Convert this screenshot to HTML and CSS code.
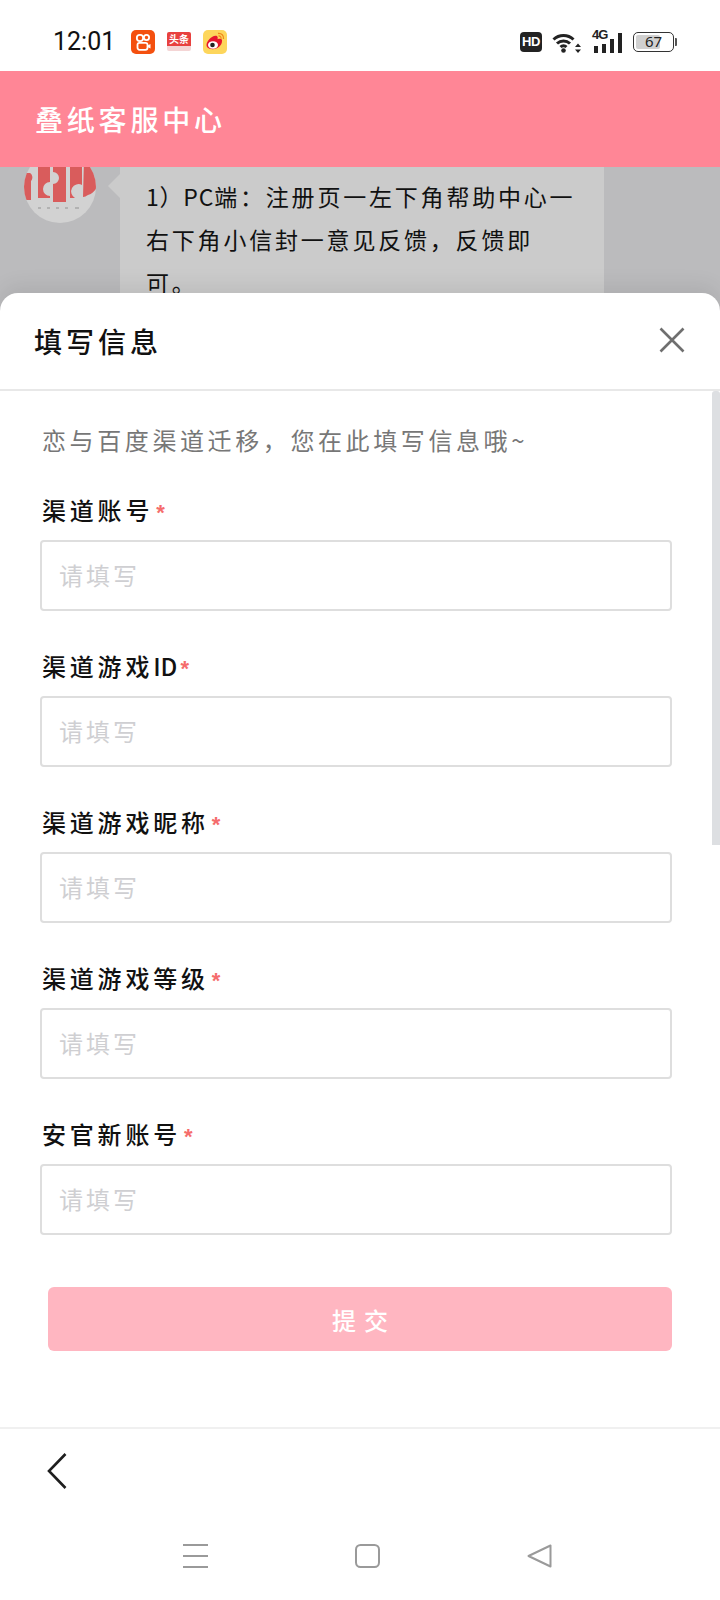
FILE: index.html
```html
<!DOCTYPE html>
<html lang="zh-CN">
<head>
<meta charset="utf-8">
<title>叠纸客服中心</title>
<link rel="stylesheet" href="styles.css">
</head>
<body>
<div class="page">
  <div class="status">
    <span class="time">12:01</span>
    <div class="apps">
      <svg class="app" viewBox="0 0 24 24"><rect width="24" height="24" rx="5" fill="#f4500f"/><circle cx="9" cy="8" r="3.200" fill="none" stroke="#fff" stroke-width="1.800"/><circle cx="15.500" cy="7.500" r="2.600" fill="none" stroke="#fff" stroke-width="1.800"/><rect x="6.500" y="12.800" width="10" height="7" rx="2" fill="none" stroke="#fff" stroke-width="1.800"/><path d="M16.500 15.500l3-1.500v4.500l-3-1.500z" fill="#fff"/></svg>
      <div class="toutiao"><span class="toutiao-text">头条</span></div>
      <svg class="app" viewBox="0 0 24 24"><rect width="24" height="24" rx="5" fill="#fdd65c"/><path d="M3.500 15c0-4 5-9 9-9.300 2.500 0 2.500 2 2 3.500 3-1 5-.3 4.500 2 0 4-4.500 8-9.500 8-3.500 0-6-1.700-6-4.200z" fill="#e6162d"/><ellipse cx="10" cy="15" rx="5" ry="3.800" fill="#fff"/><circle cx="9.500" cy="15" r="2.300" fill="#222"/><path d="M15 3.500c3.500-.5 6 2 5.500 5.500M15.500 6c1.800-.2 2.800 1 2.500 2.800" fill="none" stroke="#f08a1d" stroke-width="1.300"/></svg>
    </div>
    <div class="sys">
      <div class="hd">HD</div>
      <svg class="wifi" viewBox="0 0 31 22"><path d="M1.500 8.500a14.500 14.500 0 0 1 20 0M5 12.500a9.500 9.500 0 0 1 13 0M8.500 16a4.500 4.500 0 0 1 6 0" fill="none" stroke="#222" stroke-width="3"/><circle cx="11.500" cy="19.500" r="2.300" fill="#222"/><path d="M26 12.500l3 3.500h-6zM26 22l3-3.500h-6z" fill="#222"/></svg>
      <div class="cell">
        <span class="four-g">4G</span>
        <div class="bars"><i class="bar b1"></i><i class="bar b2"></i><i class="bar b3"></i><i class="bar b4"></i></div>
      </div>
      <div class="battery"><div class="battery-body"><span class="battery-fill"></span><span class="battery-num">67</span></div><i class="battery-nub"></i></div>
    </div>
  </div>

  <header class="topbar">叠纸客服中心</header>

  <div class="chat">
    <svg class="avatar" viewBox="0 0 72 72">
      <defs><clipPath id="ac"><circle cx="36" cy="36" r="36"/></clipPath></defs>
      <circle cx="36" cy="36" r="36" fill="#d2d2d2"/>
      <g clip-path="url(#ac)">
        <path d="M0 22h6c3 2 3 6 1 8v19H0z" fill="#d95c5c"/>
        <path d="M14 8h12v23a7 7 0 0 0 0 14v2H14z" fill="#d95c5c"/>
        <path d="M29 8h13v43H29V33a6 6 0 0 0 0-12z" fill="#d95c5c"/>
        <path d="M46 8h12v26a7 7 0 0 0-7 13h-5z" fill="#d95c5c"/>
        <path d="M60 8h12v30c-2 2-4 5-8 6-2 1-3 2-5 2z" fill="#d95c5c"/>
      </g>
      <path d="M14 57h3M23 57h3M32 57h3M41 57h3M51 57h4" stroke="#a8a8a8" stroke-width="1.500" fill="none"/>
    </svg>
    <div class="bubble"><span class="lead">1）PC</span>端：注册页一左下角帮助中心一右下角小信封一意见反馈，反馈即<br>可。</div>
  </div>

  <section class="sheet">
    <div class="sheet-head">
      <h2 class="sheet-title">填写信息</h2>
      <svg class="close" viewBox="0 0 26 26"><path d="M1.500 1.500l23 23M24.500 1.500l-23 23" stroke="#6f6f6f" stroke-width="2.600" fill="none"/></svg>
    </div>
    <div class="sheet-body">
      <i class="scrollbar"></i>
      <p class="intro">恋与百度渠道迁移，您在此填写信息哦~</p>
      <div class="field">
        <label class="label">渠道账号<span class="req">*</span></label>
        <div class="input">请填写</div>
      </div>
      <div class="field">
        <label class="label">渠道游戏<span class="tight">ID</span><span class="req">*</span></label>
        <div class="input">请填写</div>
      </div>
      <div class="field">
        <label class="label">渠道游戏昵称<span class="req">*</span></label>
        <div class="input">请填写</div>
      </div>
      <div class="field">
        <label class="label">渠道游戏等级<span class="req">*</span></label>
        <div class="input">请填写</div>
      </div>
      <div class="field">
        <label class="label">安官新账号<span class="req">*</span></label>
        <div class="input">请填写</div>
      </div>
      <button class="submit">提交</button>
    </div>
    <div class="browser-bar">
      <svg class="back" viewBox="0 0 20 36"><path d="M18.500 1L2 18l16.500 17" fill="none" stroke="#1e1e1e" stroke-width="2.600"/></svg>
    </div>
    <nav class="navbar">
      <svg class="nav-icon" viewBox="0 0 25 24"><path d="M0 1h25M0 12h25M0 23h25" stroke="#9a9a9a" stroke-width="2" fill="none"/></svg>
      <svg class="nav-icon" viewBox="0 0 25 24"><rect x="1" y="1" width="23" height="22" rx="4.500" fill="none" stroke="#9a9a9a" stroke-width="2"/></svg>
      <svg class="nav-icon" viewBox="0 0 25 24"><path d="M23.500 1.500v21L1.500 12z" fill="none" stroke="#9a9a9a" stroke-width="2" stroke-linejoin="round"/></svg>
    </nav>
  </section>
</div>
</body>
</html>
```

FILE: styles.css
```css
* { box-sizing: border-box; }
html, body { margin: 0; padding: 0; }
body { background: #fff; font-family: "Noto Sans CJK SC", "Noto Sans", sans-serif; color: #111; }
.page { position: relative; width: 720px; height: 1600px; overflow: hidden; display: flex; flex-direction: column; }

.status { height: 71px; flex: none; display: flex; align-items: center; padding: 12px 0 0 53px; background: #fff; }
.time { font-family: Roboto, sans-serif; font-size: 25px; color: #111; width: 78px; line-height: 30px; }
.apps { display: flex; align-items: center; gap: 12px; }
.app { width: 24px; height: 24px; display: block; }
.toutiao { width: 24px; height: 19px; background: #e8413f; border-radius: 2px; display: flex; justify-content: center; align-items: flex-start; overflow: hidden; border-bottom: 5px solid #f4d5d5; }
.toutiao-text { font-size: 10px; line-height: 14px; color: #fff; font-weight: 700; }
.sys { margin-left: auto; display: flex; align-items: center; padding-right: 43px; }
.hd { width: 22px; height: 20px; background: #222; border-radius: 4px; color: #fff; font-family: "Liberation Sans", sans-serif; font-weight: 700; font-size: 13px; line-height: 20px; text-align: center; letter-spacing: -.5px; }
.wifi { width: 31px; height: 22px; margin-left: 10px; display: block; }
.cell { position: relative; width: 31px; height: 22px; margin-left: 9px; }
.four-g { position: absolute; left: 0; top: -3px; font-family: "Liberation Sans", sans-serif; font-size: 13px; font-weight: 700; letter-spacing: -1px; line-height: 13px; color: #222; }
.bars { display: flex; align-items: flex-end; gap: 4px; height: 20px; margin-top: 2px; padding-left: 2px; }
.bar { display: block; width: 4px; background: #222; }
.b1 { height: 7px; }
.b2 { height: 9px; }
.b3 { height: 14px; }
.b4 { height: 20px; }
.battery { display: flex; align-items: center; margin-left: 10px; }
.battery-body { position: relative; width: 41px; height: 20px; border: 1.500px solid #333; border-radius: 5px; text-align: center; }
.battery-fill { position: absolute; left: 2px; top: 2px; bottom: 2px; width: 24px; background: #d0d0d0; border-radius: 2px; }
.battery-num { position: relative; font-family: "Noto Sans", sans-serif; font-size: 15px; line-height: 17px; color: #222; display: block; }
.battery-nub { display: block; width: 2px; height: 8px; margin-left: 1px; background: #555; border-radius: 0 1px 1px 0; }

.topbar { height: 96px; flex: none; background: #ff8696; color: #fff; font-size: 28px; font-weight: 500; letter-spacing: 3.800px; line-height: 96px; padding-left: 35px; position: relative; z-index: 1; }

.chat { flex: 1; background: #bbbbbd; display: flex; align-items: flex-start; padding-left: 24px; }
.avatar { width: 72px; height: 72px; flex: none; margin-top: -16px; display: block; }
.bubble { position: relative; margin-left: 24px; width: 484px; height: 130px; background: #cbcbcb; color: #111; font-size: 23px; letter-spacing: 2.800px; line-height: 43px; padding: 8px 19px 0 26px; }
.bubble::before { content: ""; position: absolute; left: -12px; top: 7px; border: 12px solid transparent; border-left: 0; border-right-color: #cbcbcb; }
.lead { letter-spacing: .8px; }
.tight { letter-spacing: 0; }

.sheet { position: absolute; left: 0; right: 0; top: 293px; bottom: 0; background: #fff; border-radius: 18px 18px 0 0; box-shadow: 0 -8px 20px rgba(0, 0, 0, .07); display: flex; flex-direction: column; }
.sheet-head { height: 98px; flex: none; display: flex; align-items: center; justify-content: space-between; padding: 0 35px 0 34px; border-bottom: 2px solid #e8e8e8; }
.sheet-title { margin: 0; font-size: 28px; font-weight: 500; letter-spacing: 4px; line-height: 40px; color: #111; }
.close { width: 26px; height: 26px; display: block; margin-bottom: 2px; }

.sheet-body { position: relative; height: 1036px; flex: none; padding: 0 48px 0 40px; }
.scrollbar { position: absolute; right: 0; top: 0; width: 8px; height: 454px; background: #dddfe2; border-radius: 3px 3px 0 0; }
.intro { margin: 0; padding-left: 2px; height: 97px; padding-top: 29px; font-size: 24px; letter-spacing: 3.600px; line-height: 40px; color: #777; }
.field { height: 156px; }
.label { display: block; height: 52px; padding-left: 2px; font-size: 24px; font-weight: 500; letter-spacing: 3.800px; line-height: 44px; color: #111; }
.req { margin-left: 3px; font-family: "Liberation Sans", sans-serif; font-size: 22px; font-weight: 700; color: #f56c6c; letter-spacing: 0; }
.input { height: 71px; border: 2px solid #dedede; border-radius: 4px; padding-left: 17px; font-size: 24px; letter-spacing: 3px; line-height: 65px; color: #cfcfd2; }
.submit { display: block; margin: 19px 0 0 8px; width: 624px; height: 64px; padding: 0 0 0 8px; border: 0; border-radius: 6px; background: #ffb6c1; color: #fff; font-family: inherit; font-size: 24px; font-weight: 500; letter-spacing: 8px; }

.browser-bar { height: 109px; flex: none; border-top: 2px solid #f0f0f0; padding: 24px 0 0 47px; margin-top: auto; }
.back { width: 20px; height: 36px; display: block; }
.navbar { flex: 1; display: flex; justify-content: center; gap: 147px; padding: 8px 0 0 14px; }
.nav-icon { width: 25px; height: 24px; display: block; }
```
